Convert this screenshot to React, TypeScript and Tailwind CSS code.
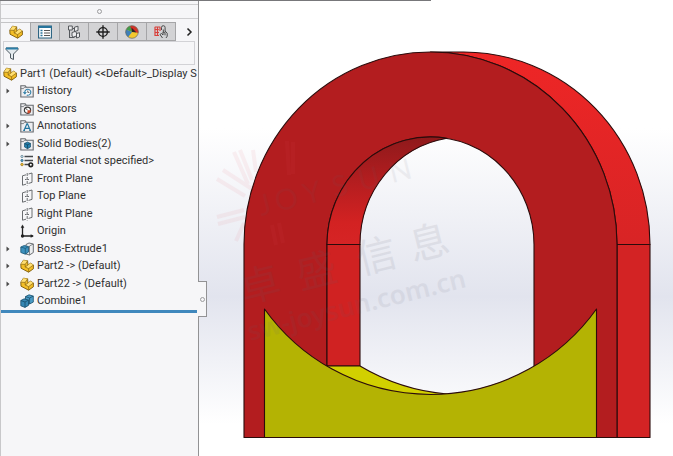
import type { ReactNode } from "react";

const outline = "#3c3c3c";

function PartIcon() {
    return (
        <svg viewBox="0 0 14 14" className="h-3.5 w-3.5 shrink-0" strokeLinejoin="round">
            <path d="M.8 5.2 3.4 1.2 7.600 1.800 8 6 10.6 4.2 13.400 6V9.800L8.600 13.200 1 9.200Z" fill="#f3be26" stroke="#7d5a0a" strokeWidth="0.9" />
            <path d="m3.4 1.200 4.200.6L5.200 5.400.8 5.200Z" fill="#ffdf72" />
            <path d="m5.400 8 2.600-2 2.600-1.800L13.400 6 8.600 9.600Z" fill="#ffdf72" />
            <path d="M.8 5.200 5.200 5.400 7.600 1.800M5.200 5.400V8l3.400 1.600v3.600M5.200 8 8 6M8.600 9.600 13.400 6" fill="none" stroke="#8a6510" strokeWidth="0.7" />
        </svg>
    );
}

function FolderIcon({ children }: { children?: ReactNode }) {
    return (
        <svg viewBox="0 0 14 14" className="h-3.5 w-3.5 shrink-0">
            <path d="M.8 13V1.800h4.400l1 1.400h7V13Z" fill="#ededf0" stroke="#66696e" strokeWidth="1.1" />
            <path d="M.8 4.600h2.700l1-1.400h2" fill="none" stroke="#66696e" strokeWidth="0.8" />
            {children}
        </svg>
    );
}

function HistoryIcon() {
    return (
        <FolderIcon>
            <path d="M4.800 8.400a3 3 0 1 1 2 2.700" fill="#fff" stroke="#2f7fa8" strokeWidth="1.1" />
            <path d="M7.800 6.400v2h1.600" fill="none" stroke={outline} strokeWidth="0.8" />
            <path d="m2.800 8 2 2.600L7 8.200Z" fill="#2f7fa8" />
        </FolderIcon>
    );
}

function SensorsIcon() {
    return (
        <FolderIcon>
            <circle cx="7.500" cy="8.200" r="3.100" fill="#fff" stroke={outline} strokeWidth="1.200" />
            <path d="m7.500 8.200-1.800-2" stroke={outline} strokeWidth="1" />
            <path d="M7.500 8.200h3.200a3.200 3.200 0 0 1-3.200 3.200Z" fill="#d2492a" />
        </FolderIcon>
    );
}

function AnnotationsIcon() {
    return (
        <FolderIcon>
            <path d="m4 11.400 2.900-6.600h.6l2.900 6.600M5 9.400h4.400M3.200 11.400h1.800M9.200 11.400H11" fill="none" stroke="#24769f" strokeWidth="1.200" />
        </FolderIcon>
    );
}

function SolidBodiesIcon() {
    return (
        <FolderIcon>
            <path d="m4.500 6.400 3-1.400 3 1.400V10l-3 1.700-3-1.700Z" fill="#2580ad" stroke="#15506f" strokeWidth="0.7" />
            <path d="m4.500 6.400 3 1.400 3-1.400M7.500 7.800v3.900" fill="none" stroke="#123f58" strokeWidth="0.7" />
        </FolderIcon>
    );
}

function MaterialIcon() {
    return (
        <svg viewBox="0 0 14 14" className="h-3.5 w-3.5 shrink-0">
            <path d="M4.500 2.500H13M4.500 6.500H13M4.500 10.500H9" stroke="#45484c" strokeWidth="1.300" />
            <circle cx="2" cy="2.500" r="1.200" fill="#b9d7e6" stroke="#55707e" strokeWidth="0.6" />
            <circle cx="2" cy="6.500" r="1.200" fill="#4f97bd" stroke="#2c617e" strokeWidth="0.6" />
            <circle cx="2" cy="10.500" r="1.300" fill="#e9b92d" stroke="#8a6510" strokeWidth="0.6" />
            <circle cx="10.800" cy="10.800" r="1.800" fill="#fff" stroke="#222" strokeWidth="1.600" />
        </svg>
    );
}

function PlaneIcon() {
    return (
        <svg viewBox="0 0 14 14" className="h-3.5 w-3.5 shrink-0" fill="none" stroke="#5a5d61" strokeWidth="0.9">
            <path d="M6 2.800 2.500 3.800v9.400L6 12.200M8.500 11.400l3.500-1V1L8.500 2" />
            <path d="M7.200 1v12.500" strokeDasharray="3 1" />
            <path d="M5 7.500h4.500" strokeDasharray="1.500 1" />
        </svg>
    );
}

function OriginIcon() {
    return (
        <svg viewBox="0 0 14 14" className="h-3.5 w-3.5 shrink-0" fill="none" stroke="#222" strokeWidth="1.300">
            <path d="M2.500 2v10H13" />
            <path d="M1 3.800 2.500.8 4 3.800ZM10.800 10.500l2.700 1.500-2.700 1.500Z" fill="#222" strokeWidth="0.300" />
            <circle cx="2.500" cy="12" r="1" fill="#222" />
        </svg>
    );
}

function ExtrudeIcon() {
    return (
        <svg viewBox="0 0 14 14" className="h-3.5 w-3.5 shrink-0" strokeLinejoin="round">
            <path d="M6 2.500 9 1l4.300 1v8.500L9.500 13 6 12Z" fill="#eceef0" stroke="#5c6165" strokeWidth="0.9" />
            <path d="m9.500 4 3.800-2M9.500 4v9" stroke="#5c6165" strokeWidth="0.7" />
            <path d="m.8 5 3.400-1.500 4.300 1.100V10l-3.200 2.200-4.500-1.700Z" fill="#3d91bd" stroke="#195473" strokeWidth="0.8" />
            <path d="m.8 5 4.500 1.400 3.200-1.800M5.300 6.400v5.800" fill="none" stroke="#195473" strokeWidth="0.7" />
        </svg>
    );
}

function CombineIcon() {
    return (
        <svg viewBox="0 0 14 14" className="h-3.5 w-3.5 shrink-0" strokeLinejoin="round" stroke="#174d69" strokeWidth="0.8">
            <path d="M5.500 2.600 9 .8l4.300 1.300v6L9.600 10l-4.100-1.500Z" fill="#4b9cc6" />
            <path d="M5.500 2.600 9.600 4l3.700-1.900M9.600 4v6" fill="none" />
            <path d="M.8 6.500 4.200 4.800l4.300 1.300v5.300L5 13.400l-4.200-1.600Z" fill="#3587b3" />
            <path d="M.8 6.500 5 8l3.500-1.900M5 8v5.400" fill="none" />
        </svg>
    );
}

function PropertyIcon() {
    return (
        <svg viewBox="0 0 14 14" className="h-3.5 w-3.5">
            <path d="M.6 1h12.800v12H.6Z" fill="#fff" stroke="#27607e" strokeWidth="1.100" />
            <path d="M.6 2h12.800" stroke="#27749c" strokeWidth="2" />
            <path d="M2.500 5.500h2M2.500 8h2M2.500 10.500h2" stroke="#27749c" strokeWidth="1.400" />
            <path d="M6 5.500h6M6 8h6M6 10.500h6" stroke="#555" strokeWidth="1" />
        </svg>
    );
}

function ConfigurationIcon() {
    return (
        <svg viewBox="0 0 14 14" className="h-3.5 w-3.5" fill="#ececee" stroke="#55585c" strokeWidth="1">
            <path d="M2.500 5v8M2.500 12.500h5M5.500 3.500h2.500" fill="none" />
            <path d="M1.500 1h3.800v4H1.500ZM7.500 2.200l3.500-1v4.300l-3.500 1ZM5 7.500l3-1 1.500 1V11L6.500 12 5 11ZM9.500 8.500l3-.8V12l-3 1Z" />
        </svg>
    );
}

function DimXpertIcon() {
    return (
        <svg viewBox="0 0 14 14" className="h-3.5 w-3.5" fill="none" stroke="#202020" strokeWidth="1.400">
            <circle cx="7" cy="7" r="4.400" />
            <path d="M7 .3v13.400M.3 7h13.400" />
        </svg>
    );
}

function DisplayIcon() {
    return (
        <svg viewBox="0 0 14 14" className="h-3.5 w-3.5">
            <circle cx="7" cy="7" r="6.300" fill="#f4c82d" />
            <path d="M7 7 1.200 4.500A6.300 6.300 0 0 1 7 .7Z" fill="#3f9e4a" />
            <path d="M5 1a6.300 6.300 0 0 1 8.200 7L7 6Z" fill="#d62f25" />
            <path d="M1.200 4.500 7 7l-3.800 5a6.300 6.300 0 0 1-2-7.500Z" fill="#3d7fb8" />
            <path d="m6.500 2.500 5 5-4.500-.5Z" fill="#262626" />
            <circle cx="7" cy="7" r="6.300" fill="none" stroke="#666" strokeWidth="0.700" />
        </svg>
    );
}

function CamIcon() {
    return (
        <svg viewBox="0 0 14 14" className="h-3.5 w-3.5" fill="none">
            <path d="M.8 2h5.500M.8 4.500h4M1 2v8.500h4M3.500 2v8.500M6 2v4M1 7.500h4" stroke="#d8403b" strokeWidth="1.200" />
            <path d="M7.500 5V2.500a1.800 1.800 0 0 1 3.600 0V6l2.100 2.200v3L12 13M9.300 4.500v3M8.500 13 6 9.500l1.500-1L9 10V7l2 .3v3" stroke="#4b4b4b" strokeWidth="1" />
        </svg>
    );
}

const tabs = [
    { label: "FeatureManager Design Tree", icon: <PartIcon /> },
    { label: "PropertyManager", icon: <PropertyIcon /> },
    { label: "ConfigurationManager", icon: <ConfigurationIcon /> },
    { label: "DimXpertManager", icon: <DimXpertIcon /> },
    { label: "DisplayManager", icon: <DisplayIcon /> },
    { label: "CAM Feature Tree", icon: <CamIcon /> },
];

const features = [
    { name: "History", icon: <HistoryIcon />, expandable: true },
    { name: "Sensors", icon: <SensorsIcon /> },
    { name: "Annotations", icon: <AnnotationsIcon />, expandable: true },
    { name: "Solid Bodies(2)", icon: <SolidBodiesIcon />, expandable: true },
    { name: "Material <not specified>", icon: <MaterialIcon /> },
    { name: "Front Plane", icon: <PlaneIcon /> },
    { name: "Top Plane", icon: <PlaneIcon /> },
    { name: "Right Plane", icon: <PlaneIcon /> },
    { name: "Origin", icon: <OriginIcon /> },
    { name: "Boss-Extrude1", icon: <ExtrudeIcon />, expandable: true },
    { name: "Part2 -> (Default)", icon: <PartIcon />, expandable: true },
    { name: "Part22 -> (Default)", icon: <PartIcon />, expandable: true },
    { name: "Combine1", icon: <CombineIcon /> },
];

function TabBar() {
    return (
        <div className="flex h-[19px]">
            {tabs.map((tab, i) => (
                <button
                    key={tab.label}
                    aria-label={tab.label}
                    className={
                        i === 0
                            ? "flex w-[29px] items-center justify-center border-t border-[#c4c4c6]"
                            : "flex w-[29px] items-center justify-center border border-r-0 border-[#a5a5a7] bg-[#d3d3d5]"
                    }
                >
                    {tab.icon}
                </button>
            ))}
            <button aria-label="More tabs" className="flex flex-1 items-center justify-end border-l border-[#a5a5a7] pr-1">
                <svg viewBox="0 0 8 10" className="h-2.5 w-2" fill="none" stroke="#222" strokeWidth="1.500">
                    <path d="M1.500 1.500 5 5 1.500 8.500" />
                </svg>
            </button>
        </div>
    );
}

function FilterBox() {
    return (
        <label className="mr-[3px] ml-0.5 flex h-6 items-center border border-[#d2d2d6] px-px">
            <svg viewBox="0 0 14 14" className="h-3.5 w-3.5 shrink-0" strokeLinejoin="round">
                <path d="M1 2h12v1.500L8.500 8v5.500l-3-1.400V8L1 3.500Z" fill="#e4eaee" stroke="#4d5961" strokeWidth="1" />
                <path d="M1 1.500h12v2H1Z" fill="#2b7ea8" />
            </svg>
            <input aria-label="Filter" className="w-full min-w-0 bg-transparent pl-1 outline-none" />
        </label>
    );
}

function FeatureTree() {
    return (
        <ul className="grid h-[245px] auto-rows-fr whitespace-nowrap">
            <li className="flex items-center gap-[3px] pl-0.5">
                <PartIcon />
                <span>{"Part1 (Default) <<Default>_Display S"}</span>
            </li>
            {features.map((feature) => (
                <li key={feature.name} className="flex items-center gap-[3px] pl-1">
                    <span className="flex w-3 shrink-0">
                        {feature.expandable && (
                            <button aria-label={`Expand ${feature.name}`} className="flex h-3 w-2 items-center">
                                <svg viewBox="0 0 6 8" className="h-2 w-1.5">
                                    <path d="m1.500 1.500 3 2.500-3 2.500Z" fill="#4a4a4a" />
                                </svg>
                            </button>
                        )}
                    </span>
                    {feature.icon}
                    <span>{feature.name}</span>
                </li>
            ))}
        </ul>
    );
}

function FeaturePanel() {
    return (
        <aside className="relative flex w-[199px] shrink-0 flex-col border-r border-l border-r-[#929294] border-l-[#c8c8ca] bg-[#f6f6f8]">
            <div className="mt-[3px] mb-[3px] flex h-[15px] items-center justify-center border-y border-[#cfcfd1]">
                <span className="h-[5px] w-[5px] rounded-full border border-[#9c9c9e]" />
            </div>
            <TabBar />
            <FilterBox />
            <FeatureTree />
            <div className="mr-px h-[3px] bg-[#4088bd]" />
            <button
                aria-label="Collapse panel"
                className="absolute top-[280px] -right-[9px] flex h-9 w-[9px] items-center justify-center border border-l-0 border-[#929294] bg-[#f6f6f8]"
            >
                <span className="h-[5px] w-[5px] rounded-full border border-[#9c9c9e]" />
            </button>
        </aside>
    );
}

function Watermark() {
    return (
        <g fill="#606070">
            <path
                d="m217 217 27-7M218 224l27-7M217 179l28 17M223 170l29 19M234 152l14 32M240 150l12 30M253 150l3 22M287 141l2 34M293 142l0 32M236 241l8-18M276 245l-4-20M283 243l-4-20"
                stroke="#e05060"
                strokeWidth="4"
                opacity="0.07"
            />
            <text opacity="0.08" fontSize="29" transform="translate(261 216) rotate(-14)" className="font-[Lato,sans-serif]">
                <tspan x="0">J</tspan>
                <tspan x="17">O</tspan>
                <tspan x="46">Y</tspan>
                <tspan x="76">S</tspan>
                <tspan x="103">U</tspan>
                <tspan x="135">N</tspan>
            </text>
            <text opacity="0.1" fontSize="40" transform="translate(250 302) rotate(-14)" className="font-['Noto_Sans_CJK_SC',sans-serif]">
                <tspan x="-6">卓</tspan>
                <tspan x="52">盛</tspan>
                <tspan x="114">信</tspan>
                <tspan x="168">息</tspan>
            </text>
            <text
                opacity="0.09"
                fontSize="26"
                transform="translate(250 341) rotate(-14)"
                className="font-['Noto_Sans',sans-serif] font-semibold"
            >
                sw-joysun.com.cn
            </text>
        </g>
    );
}

function ModelView() {
    return (
        <svg viewBox="199 1 474 455" className="h-full w-full" role="img" aria-label="Part1 model">
            <defs>
                <linearGradient id="bore" x1="0" y1="0" x2="0" y2="1">
                    <stop offset="0" stopColor="#8f191b" />
                    <stop offset="0.450" stopColor="#b71e20" />
                    <stop offset="0.800" stopColor="#d32222" />
                    <stop offset="1" stopColor="#d62425" />
                </linearGradient>
                <linearGradient id="rim" x1="0" y1="0" x2="0" y2="1">
                    <stop offset="0" stopColor="#ee2626" />
                    <stop offset="1" stopColor="#d82425" />
                </linearGradient>
            </defs>
            <g stroke="#2b0b0b" strokeWidth="1.100" strokeLinejoin="round">
                <path d="M430.500 52H463.500A186.500 192.500 0 0 1 650 244.500H617A186.500 192.500 0 0 0 430.500 52Z" fill="url(#rim)" />
                <path d="M617 244.500h33v193h-33Z" fill="#d32324" />
                <path
                    d="M244 437.500v-193A186.500 192.500 0 0 1 617 244.500v193ZM327 244.500V400H534V244.500A103.500 107.500 0 0 0 327 244.500Z"
                    fill="#b31d1f"
                    fillRule="evenodd"
                />
                <path d="M327 244.500A103.500 107.500 0 0 1 447 138.300A103.500 107.500 0 0 0 360 244.500Z" fill="url(#bore)" />
                <path d="M327 244.500h33V366h-33Z" fill="#d02222" />
                <path d="M327 366h33A204 204 0 0 0 447 394L440 400H327Z" fill="#d2d000" />
                <path d="M264.500 437.500V309A204 204 0 0 0 596.500 309V437.500Z" fill="#b4b303" />
            </g>
            <Watermark />
        </svg>
    );
}

export default function App() {
    return (
        <div className="flex h-screen min-h-80 flex-col overflow-hidden bg-white font-[Roboto,'Noto_Sans',sans-serif] text-[11px] leading-4 text-[#303030]">
            <div className="h-px w-[64%] bg-[#77777a]" />
            <div className="flex min-h-0 flex-1">
                <FeaturePanel />
                <main className="min-w-0 flex-1 bg-linear-to-b from-white from-28% via-[#e2e4ee] via-65% to-white to-93%">
                    <ModelView />
                </main>
            </div>
        </div>
    );
}
